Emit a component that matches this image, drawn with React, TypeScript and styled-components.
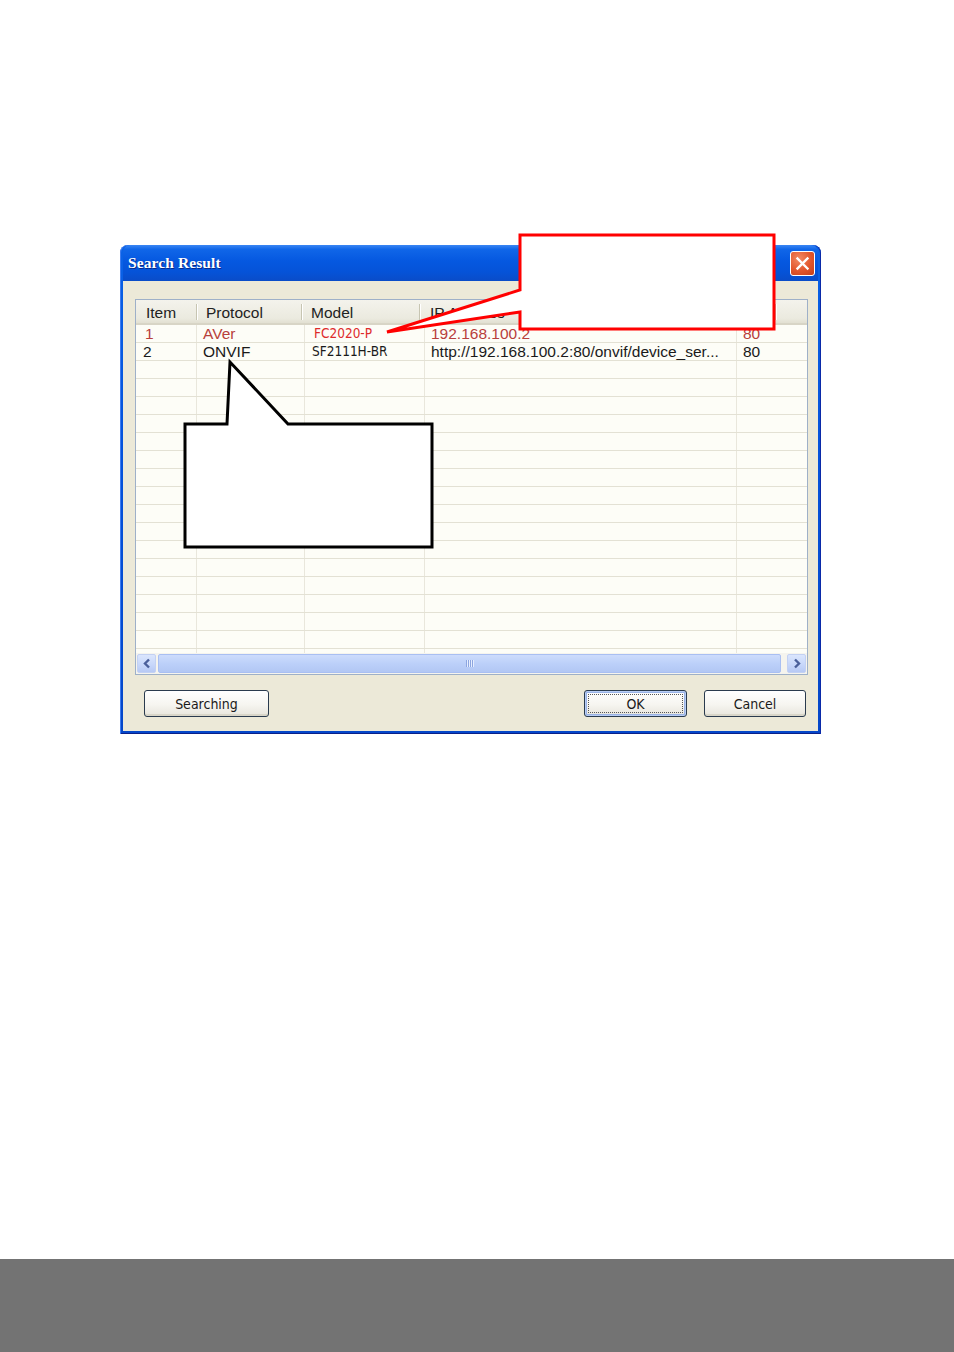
import React from "react";
import styled, { createGlobalStyle } from "styled-components";

const Global = createGlobalStyle`
  html, body { margin: 0; padding: 0; background: #ffffff; }
  body { font-family: "Liberation Sans", Arial, sans-serif; }
`;

const Page = styled.div`
  position: relative;
  width: 954px;
  height: 1352px;
  display: flex;
  flex-direction: column;
  background: #ffffff;
  overflow: hidden;
`;

const Stage = styled.div`
  padding: 245px 0 0 120px;
`;

const Footer = styled.div`
  margin-top: auto;
  height: 93px;
  background: #737373;
`;

const Window = styled.div`
  width: 701px;
  height: 489px;
  box-sizing: border-box;
  display: flex;
  flex-direction: column;
  border-radius: 8px 8px 0 0;
  background: linear-gradient(180deg, #0a62e6 0%, #0553dc 40%, #0547c9 100%);
  padding: 0 3px 3px 3px;
  box-shadow: inset 1px 0 0 #3d7cf0, inset -1px 0 0 #0a2aa8, inset 0 -1px 0 #0a2088;
`;

const TitleBar = styled.div`
  height: 36px;
  display: flex;
  align-items: center;
  justify-content: space-between;
  padding: 0 3px 0 5px;
  border-radius: 7px 7px 0 0;
  background: linear-gradient(180deg, #3a86f3 0%, #1066e8 12%, #0558e0 45%, #0553d8 75%, #0a4cc8 100%);
`;

const Title = styled.span`
  font-family: "Liberation Serif", "Times New Roman", serif;
  font-weight: bold;
  font-size: 15.5px;
  color: #ffffff;
  text-shadow: 1px 1px 0 #0a2a8a;
  letter-spacing: 0.1px;
`;

const CloseBtn = styled.div`
  width: 23px;
  height: 23px;
  border: 1px solid #ffffff;
  border-radius: 3px;
  background: radial-gradient(circle at 35% 30%, #f28a64 0%, #e2562c 55%, #c53f1a 100%);
  display: flex;
  align-items: center;
  justify-content: center;
`;

const Body = styled.div`
  flex: 1;
  display: flex;
  flex-direction: column;
  background: #ece9d8;
  padding: 18px 10px 14px 12px;
`;

const ListBox = styled.div`
  height: 376px;
  box-sizing: border-box;
  border: 1px solid #9eb0c8;
  background: #fdfdf7;
  display: flex;
  flex-direction: column;
  overflow: hidden;
`;

const Header = styled.div`
  height: 25px;
  flex: none;
  display: grid;
  grid-template-columns: 61px 105px 118px 316px 40px 1fr;
  background: linear-gradient(180deg, #f4f3ec 0%, #ebeadf 80%, #e2e0d2 100%);
  border-bottom: 2px solid #d8d5c6;
  box-sizing: border-box;
`;

const HeadCell = styled.div<{ $pad: number; $divider?: boolean }>`
  display: flex;
  align-items: center;
  padding-left: ${(p) => p.$pad}px;
  padding-top: 2px;
  font-size: 15.5px;
  color: #222222;
  border-right: ${(p) => (p.$divider === false ? "none" : "1px solid #c7c5b2")};
  box-shadow: ${(p) => (p.$divider === false ? "none" : "1px 0 0 #ffffff")};
  margin: 4px 0 3px 0;
  white-space: nowrap;
  overflow: hidden;
`;

const Rows = styled.div`
  flex: 1;
  overflow: hidden;
  padding-bottom: 3px;
`;

const Row = styled.div`
  height: 18px;
  display: grid;
  grid-template-columns: 61px 108px 120px 312px 1fr;
  box-sizing: border-box;
  border-bottom: 1px solid #e3e1d4;
`;

const Cell = styled.div<{ $pad: number; $tone?: "red" | "bright" | "dark"; $small?: boolean }>`
  display: flex;
  align-items: center;
  padding-left: ${(p) => p.$pad}px;
  font-size: ${(p) => (p.$small ? "13.5px" : "15.5px")};
  font-family: ${(p) => (p.$small ? '"DejaVu Sans Condensed", "Liberation Sans", sans-serif' : '"Liberation Sans", Arial, sans-serif')};
  color: ${(p) => (p.$tone === "red" ? "#b8403c" : p.$tone === "bright" ? "#dd2b2b" : "#1a1a1a")};
  border-right: 1px solid #e9e7dc;
  white-space: nowrap;
  overflow: hidden;
  line-height: 1;
  &:last-child { border-right: none; }
`;

const ScrollBar = styled.div`
  height: 20px;
  flex: none;
  display: flex;
  align-items: center;
  gap: 2px;
  padding: 0 1px 1px 1px;
  background: #f5f4ee;
`;

const ArrowBtn = styled.div`
  width: 19px;
  height: 19px;
  flex: none;
  box-sizing: border-box;
  border: 1px solid #c3d1f3;
  border-radius: 2px;
  background: linear-gradient(180deg, #dbe6fd 0%, #c6d6fa 60%, #b7c9f4 100%);
  display: flex;
  align-items: center;
  justify-content: center;
`;

const Track = styled.div`
  flex: 1;
  height: 19px;
  display: flex;
  align-items: center;
  padding-right: 4px;
`;

const Thumb = styled.div`
  flex: 1;
  height: 19px;
  box-sizing: border-box;
  border: 1px solid #a9bff2;
  border-radius: 2px;
  background: linear-gradient(180deg, #cddcfc 0%, #bcd0f9 50%, #b2c7f4 100%);
  display: flex;
  align-items: center;
  justify-content: center;
`;

const Grip = styled.div`
  width: 8px;
  height: 7px;
  background: repeating-linear-gradient(90deg, #8da6e0 0px, #8da6e0 1px, #e6eeff 1px, #e6eeff 2px);
`;

const ButtonRow = styled.div`
  margin-top: 15px;
  display: flex;
  padding: 0 2px 0 9px;
  gap: 17px;
`;

const Spacer = styled.div`
  flex: 1;
`;

const XPButton = styled.div<{ $w: number; $focused?: boolean }>`
  width: ${(p) => p.$w}px;
  height: 27px;
  box-sizing: border-box;
  border: 1px solid #2a3b4e;
  border-radius: 3px;
  background: linear-gradient(180deg, #ffffff 0%, #f6f5f0 55%, #e7e5dc 100%);
  box-shadow: ${(p) =>
    p.$focused
      ? "inset 0 0 0 1px #b8cdf4, inset 0 0 0 2px #9ab3e6"
      : "inset 0 -2px 0 #d9d6c9"};
  display: flex;
  align-items: center;
  justify-content: center;
  font-family: "DejaVu Sans Condensed", "Liberation Sans", sans-serif;
  font-size: 14px;
  color: #1a1a1a;
  position: relative;
`;

const FocusRing = styled.span`
  position: absolute;
  inset: 3px;
  border: 1px dotted #555555;
  pointer-events: none;
`;

const Overlay = styled.svg`
  position: absolute;
  left: 0;
  top: 0;
  width: 954px;
  height: 1352px;
  pointer-events: none;
`;

type RowData = { item: string; protocol: string; model: string; ip: string; port: string; red?: boolean };

const data: RowData[] = [
  { item: "1", protocol: "AVer", model: "FC2020-P", ip: "192.168.100.2", port: "80", red: true },
  { item: "2", protocol: "ONVIF", model: "SF2111H-BR", ip: "http://192.168.100.2:80/onvif/device_ser...", port: "80" },
];

const EMPTY_ROWS = 17;

export default function App() {
  return (
    <Page>
      <Global />
      <Stage>
        <Window>
          <TitleBar>
            <Title>Search Result</Title>
            <CloseBtn>
              <svg width="15" height="15" viewBox="0 0 15 15">
                <path d="M2.5 2.5 L12.5 12.5 M12.5 2.5 L2.5 12.5" stroke="#ffffff" strokeWidth="2.4" strokeLinecap="square" />
              </svg>
            </CloseBtn>
          </TitleBar>
          <Body>
            <ListBox>
              <Header>
                <HeadCell $pad={10}>Item</HeadCell>
                <HeadCell $pad={9}>Protocol</HeadCell>
                <HeadCell $pad={9}>Model</HeadCell>
                <HeadCell $pad={10}>IP Address</HeadCell>
                <HeadCell $pad={6}>Port</HeadCell>
                <HeadCell $pad={0} $divider={false} />
              </Header>
              <Rows>
                {data.map((r) => (
                  <Row key={r.item}>
                    <Cell $pad={r.red ? 9 : 7} $tone={r.red ? "red" : "dark"}>{r.item}</Cell>
                    <Cell $pad={6} $tone={r.red ? "red" : "dark"}>{r.protocol}</Cell>
                    <Cell $pad={r.red ? 9 : 7} $tone={r.red ? "bright" : "dark"} $small>{r.model}</Cell>
                    <Cell $pad={6} $tone={r.red ? "red" : "dark"}>{r.ip}</Cell>
                    <Cell $pad={6} $tone={r.red ? "red" : "dark"}>{r.port}</Cell>
                  </Row>
                ))}
                {Array.from({ length: EMPTY_ROWS }).map((_, i) => (
                  <Row key={"e" + i}>
                    <Cell $pad={0} />
                    <Cell $pad={0} />
                    <Cell $pad={0} />
                    <Cell $pad={0} />
                    <Cell $pad={0} />
                  </Row>
                ))}
              </Rows>
              <ScrollBar>
                <ArrowBtn>
                  <svg width="10" height="11" viewBox="0 0 10 11">
                    <path d="M7 1.5 L3 5.5 L7 9.5" fill="none" stroke="#4a5f9a" strokeWidth="2.4" />
                  </svg>
                </ArrowBtn>
                <Track>
                  <Thumb>
                    <Grip />
                  </Thumb>
                </Track>
                <ArrowBtn>
                  <svg width="10" height="11" viewBox="0 0 10 11">
                    <path d="M3 1.5 L7 5.5 L3 9.5" fill="none" stroke="#4a5f9a" strokeWidth="2.4" />
                  </svg>
                </ArrowBtn>
              </ScrollBar>
            </ListBox>
            <ButtonRow>
              <XPButton $w={125}>Searching</XPButton>
              <Spacer />
              <XPButton $w={103} $focused>
                OK
                <FocusRing />
              </XPButton>
              <XPButton $w={102}>Cancel</XPButton>
            </ButtonRow>
          </Body>
        </Window>
      </Stage>
      <Footer />
      <Overlay viewBox="0 0 954 1352">
        <polygon
          points="520,235 774,235 774,329 520,329 520,312 387,332 520,290"
          fill="#ffffff"
          stroke="#ff0000"
          strokeWidth="3"
          strokeLinejoin="miter"
        />
        <polygon
          points="185,424 227,424 230,362 288,424 432,424 432,547 185,547"
          fill="#ffffff"
          stroke="#000000"
          strokeWidth="3"
          strokeLinejoin="miter"
        />
      </Overlay>
    </Page>
  );
}
